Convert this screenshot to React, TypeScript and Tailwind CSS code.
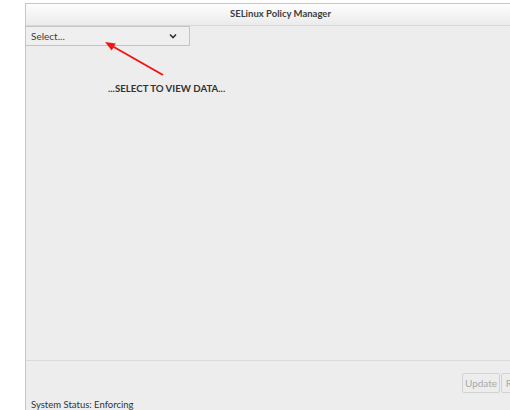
export default function App() {
  return (
    <div
      className="w-[510px] h-[410px] overflow-hidden bg-white pt-[3px] pl-[25px] text-[#2e3436]"
      style={{ fontFamily: 'Lato, "Noto Sans", sans-serif' }}
    >
      <div className="relative w-[516px] h-[420px] bg-[#ededed] border-l border-t border-[#c6c6c6] flex flex-col">
        {/* title bar */}
        <div className="h-[22px] shrink-0 flex items-center justify-center bg-gradient-to-b from-[#fdfdfd] to-[#ebebeb] border-b border-[#d8d8d8] pr-[6px]">
          <span className="text-[9.5px] font-bold text-[#3a3f41]">SELinux Policy Manager</span>
        </div>

        {/* select */}
        <div className="h-[20px] w-[165px] shrink-0 -ml-px flex items-center justify-between border border-[#c4c4c4] bg-[#efefef] pl-[5px] pr-[12px]">
          <span className="text-[10px] text-[#3c3c3c]">Select...</span>
          <svg width="8" height="6" viewBox="0 0 8 6">
            <path d="M1 1.5 L4 4.5 L7 1.5" fill="none" stroke="#2e3436" strokeWidth="1.6" />
          </svg>
        </div>

        {/* content */}
        <div className="h-[314px] shrink-0">
          <div className="pl-[82px] pt-[35px] text-[9.7px] leading-[14px] font-bold text-[#333]">...SELECT TO VIEW DATA...</div>
        </div>

        {/* bottom */}
        <div className="border-t border-[#dadada] flex flex-col">
          <div className="flex justify-end gap-[1px] pt-[12px] pr-[2px]">
            <div className="h-[20px] w-[38px] flex items-center justify-center border border-[#d2d2d2] rounded-[2px] text-[10px] text-[#a9a9a9]">Update</div>
            <div className="h-[20px] w-[38px] flex items-center justify-center border border-[#d2d2d2] rounded-[2px] text-[10px] text-[#a9a9a9]">Revert</div>
          </div>
          <div className="pl-[5px] pt-[5px] text-[9.5px] text-[#2e3436] leading-[13px]">System Status: Enforcing</div>
        </div>

        {/* red annotation arrow */}
        <svg className="absolute left-0 top-0 pointer-events-none" width="160" height="80" viewBox="0 0 160 80">
          <line x1="137" y1="71" x2="87" y2="42.5" stroke="#f01616" strokeWidth="2" />
          <path d="M79 38 L85.7 46.4 L89.7 39.4 Z" fill="#f01616" />
        </svg>
      </div>
    </div>
  )
}
